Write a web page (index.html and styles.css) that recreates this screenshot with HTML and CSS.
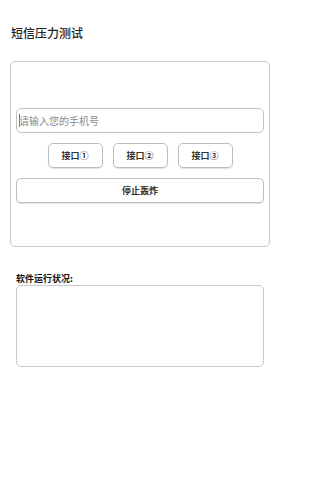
FILE: index.html
```html
<!DOCTYPE html>
<html lang="zh">
<head>
<meta charset="utf-8">
<link rel="stylesheet" href="styles.css">
</head>
<body>
<div class="page">
  <h1 class="title">短信压力测试</h1>
  <div class="card">
    <div class="field"><span class="caret"></span><span class="placeholder">请输入您的手机号</span></div>
    <div class="btn-row">
      <div class="btn">接口①</div>
      <div class="btn">接口②</div>
      <div class="btn">接口③</div>
    </div>
    <div class="btn wide">停止轰炸</div>
  </div>
  <div class="status">
    <div class="label">软件运行状况:</div>
    <div class="log"></div>
  </div>
</div>
</body>
</html>
```
FILE: styles.css
```css
html, body {
  margin: 0;
  padding: 0;
  background: #fff;
}
body {
  font-family: "Noto Sans CJK SC", "Noto Sans", sans-serif;
  color: #222;
}
.page {
  width: 280px;
  height: 500px;
  box-sizing: border-box;
  padding-top: 25px;
}
.title {
  margin: 0 0 0 11px;
  font-size: 12px;
  line-height: 16px;
  font-weight: 500;
  color: #222;
}
.card {
  margin: 20px 10px 0 10px;
  height: 186px;
  box-sizing: border-box;
  border: 1px solid #c9c9c9;
  border-radius: 5px;
  padding: 46px 5px 0 5px;
  display: flex;
  flex-direction: column;
}
.field {
  height: 25px;
  box-sizing: border-box;
  border: 1px solid #c4c4c4;
  border-radius: 5px;
  display: flex;
  align-items: center;
  padding-left: 2px;
}
.caret {
  width: 1px;
  height: 13px;
  background: #d8506a;
}
.placeholder {
  font-size: 10px;
  color: #8a8a8a;
  margin-left: -1px;
}
.btn-row {
  display: flex;
  justify-content: center;
  gap: 10px;
  margin-top: 10px;
}
.btn {
  width: 55px;
  height: 25px;
  box-sizing: border-box;
  border: 1px solid #bdbdbd;
  border-radius: 5px;
  box-shadow: 0 1px 1px rgba(0,0,0,0.12);
  display: flex;
  align-items: center;
  justify-content: center;
  font-size: 9px;
  font-weight: 700;
  color: #333;
}
.btn.wide {
  width: auto;
  margin-top: 10px;
  height: 25px;
}
.status {
  margin: 26px 16px 0 16px;
}
.label {
  font-size: 9px;
  line-height: 12px;
  font-weight: 700;
  color: #111;
}
.log {
  height: 82px;
  box-sizing: border-box;
  border: 1px solid #c9c9c9;
  border-radius: 5px;
  margin-top: 0;
}
```
